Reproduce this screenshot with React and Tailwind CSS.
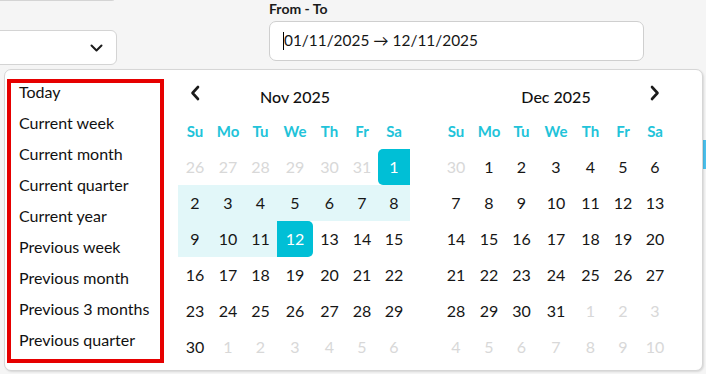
import React from 'react';

// Date range picker with presets (Nov / Dec 2025)

const FONT = "font-['Lato','Noto_Sans',sans-serif]";
const COLS = 'grid grid-cols-[34px_32px_33px_36px_33px_32px_32px]';
const WEEKDAYS = ['Su', 'Mo', 'Tu', 'We', 'Th', 'Fr', 'Sa'];

const PRESETS = [
    'Today',
    'Current week',
    'Current month',
    'Current quarter',
    'Current year',
    'Previous week',
    'Previous month',
    'Previous 3 months',
    'Previous quarter',
];

// d: day number, o: outside month, s: start, e: end, r: in range
const NOV = [
    [{ d: 26, o: 1 }, { d: 27, o: 1 }, { d: 28, o: 1 }, { d: 29, o: 1 }, { d: 30, o: 1 }, { d: 31, o: 1 }, { d: 1, s: 1 }],
    [2, 3, 4, 5, 6, 7, 8].map(d => ({ d, r: 1 })),
    [{ d: 9, r: 1 }, { d: 10, r: 1 }, { d: 11, r: 1 }, { d: 12, e: 1 }, { d: 13 }, { d: 14 }, { d: 15 }],
    [16, 17, 18, 19, 20, 21, 22].map(d => ({ d })),
    [23, 24, 25, 26, 27, 28, 29].map(d => ({ d })),
    [{ d: 30 }, ...[1, 2, 3, 4, 5, 6].map(d => ({ d, o: 1 }))],
];

const DEC = [
    [{ d: 30, o: 1 }, ...[1, 2, 3, 4, 5, 6].map(d => ({ d }))],
    [7, 8, 9, 10, 11, 12, 13].map(d => ({ d })),
    [14, 15, 16, 17, 18, 19, 20].map(d => ({ d })),
    [21, 22, 23, 24, 25, 26, 27].map(d => ({ d })),
    [...[28, 29, 30, 31].map(d => ({ d })), ...[1, 2, 3].map(d => ({ d, o: 1 }))],
    [4, 5, 6, 7, 8, 9, 10].map(d => ({ d, o: 1 })),
];

function Chevron({ dir }) {
    return (
        <svg width="10" height="16" viewBox="0 0 10 16" fill="none" className="text-[#1b1b1b]">
            <path
                d={dir === 'left' ? 'M8 2 L2.5 8 L8 14' : 'M2 2 L7.5 8 L2 14'}
                stroke="currentColor"
                strokeWidth="2.6"
                strokeLinecap="round"
                strokeLinejoin="round"
            />
        </svg>
    );
}

function DayCell({ cell }) {
    let cls = 'h-[36px] flex items-center justify-center text-[16px] ';
    if (cell.s) cls += 'bg-[#00bfd6] text-white rounded-l-[5px]';
    else if (cell.e) cls += 'bg-[#00bfd6] text-white rounded-r-[5px]';
    else if (cell.r) cls += 'bg-[#e2f7f9] text-[#161616]';
    else if (cell.o) cls += 'text-[#d8d8d8]';
    else cls += 'text-[#161616]';
    return <div className={cls}>{cell.d}</div>;
}

function Month({ title, rows, prev, next }) {
    return (
        <div className="w-[232px] flex flex-col">
            <div className="grid grid-cols-[34px_1fr_32px] h-[36px] mt-[9px] items-center">
                <div className="flex justify-center pb-[8px]">{prev && <Chevron dir="left" />}</div>
                <div className="text-center text-[16px] font-medium text-[#111]">{title}</div>
                <div className="flex justify-center pb-[8px]">{next && <Chevron dir="right" />}</div>
            </div>
            <div className={`${COLS} h-[26px] mt-[3px] items-center`}>
                {WEEKDAYS.map(w => (
                    <div key={w} className="text-center text-[15px] font-bold text-[#22c3d9]">{w}</div>
                ))}
            </div>
            <div className="mt-[5px] flex flex-col">
                {rows.map((row, i) => (
                    <div key={i} className={COLS}>
                        {row.map((cell, j) => <DayCell key={j} cell={cell} />)}
                    </div>
                ))}
            </div>
        </div>
    );
}

export default function App() {
    return (
        <div className={`${FONT} relative w-[706px] h-[374px] overflow-hidden bg-[#f5f5f5] text-[#111]`}>
            {/* Form row */}
            <div className="flex">
                <div className="w-[117px] flex flex-col">
                    <div className="h-[2px] w-[114px] -mt-px border border-t-0 border-[#d4d4d4] bg-white rounded-br-[6px]" />
                    <div className="mt-[29px] h-[35px] w-[127px] -ml-[10px] border border-[#d4d4d4] bg-white rounded-[6px] flex items-center justify-end pr-[13px]">
                        <svg width="13" height="8" viewBox="0 0 13 8" fill="none">
                            <path d="M1.5 1.5 L6.5 6.5 L11.5 1.5" stroke="#1b1b1b" strokeWidth="2" strokeLinecap="round" strokeLinejoin="round" />
                        </svg>
                    </div>
                </div>
                <div className="ml-[152px] flex flex-col">
                    <div className="text-[14px] font-bold leading-[17px] text-[#1a1a1a]">From - To</div>
                    <div className="mt-[4px] w-[375px] h-[40px] border border-[#cfcfcf] bg-white rounded-[7px] flex items-center pl-[13px] text-[15.4px] text-[#161616]">
                        <span className="w-px h-[18px] bg-black" />
                        <span>01/11/2025 → 12/11/2025</span>
                    </div>
                </div>
            </div>

            {/* Something behind the popup, at the right edge */}
            <div className="absolute right-0 top-[140px] w-[5px] h-[29px] bg-[#4cc2ee]" />

            {/* Dropdown popup */}
            <div className="absolute left-[4px] top-[69px] w-[699px] h-[302px] bg-white border border-[#d6d6d6] rounded-[7px] shadow-[1px_1px_2px_rgba(0,0,0,0.12)] flex">
                <div className="ml-[2px] mt-[9px] w-[157px] h-[284px] border-4 border-[#e60000] overflow-hidden">
                    <div className="-mt-[7px] pl-[8px] flex flex-col">
                        {PRESETS.map(p => (
                            <div key={p} className="h-[31px] leading-[31px] text-[16px] text-[#111] whitespace-nowrap">{p}</div>
                        ))}
                    </div>
                </div>
                <div className="ml-[14px] flex gap-[29px]">
                    <Month title="Nov 2025" rows={NOV} prev />
                    <Month title="Dec 2025" rows={DEC} next />
                </div>
            </div>
        </div>
    );
}
